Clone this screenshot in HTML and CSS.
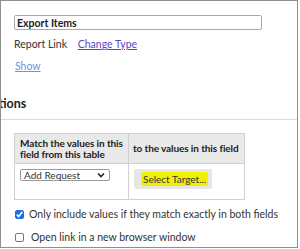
FILE: index.html
```html
<!DOCTYPE html>
<html lang="en">
<head>
    <meta charset="UTF-8">
    <title>Link Options</title>
    <link rel="stylesheet" href="styles.css">
</head>
<body>
    <div class="frame">
        <div class="top">
            <input class="name-input" type="text" value="Export Items">
            <div class="type-row">
                <span class="type-label">Report Link</span>
                <a href="#" class="change-link">Change Type</a>
            </div>
            <a href="#" class="show-link">Show</a>
        </div>

        <!-- Options -->
        <h2 class="section-title">Link Options</h2>
        <div class="section-body">
            <table class="match-table">
                <tr>
                    <th class="col-from">Match the values in this field from this table</th>
                    <th class="col-to">to the values in this field</th>
                </tr>
                <tr>
                    <td>
                        <div class="select-box">
                            <span>Add Request</span>
                            <svg class="chev" width="8" height="6" viewBox="0 0 8 6"><path d="M1 1.5 L4 4.5 L7 1.5" fill="none" stroke="#222" stroke-width="1.6"/></svg>
                        </div>
                    </td>
                    <td>
                        <div class="target-btn"><span class="hl">Select Target...</span></div>
                    </td>
                </tr>
            </table>

            <label class="check-row">
                <span class="box checked">
                    <svg width="9" height="9" viewBox="0 0 9 9"><path d="M1.8 4.6 L3.7 6.6 L7.3 2" fill="none" stroke="#fff" stroke-width="1.6"/></svg>
                </span>
                <span class="check-text">Only include values if they match exactly in both fields</span>
            </label>
            <label class="check-row second">
                <span class="box"></span>
                <span class="check-text">Open link in a new browser window</span>
            </label>
        </div>
    </div>
</body>
</html>
```

FILE: styles.css
```css
body {
    margin: 0;
    font-family: Lato, "Open Sans", sans-serif;
    color: #333;
    background: #fff;
}
.frame {
    width: 298px;
    height: 248px;
    border: 1px solid #8f8f8f;
    box-sizing: border-box;
    overflow: hidden;
}
.top {
    padding: 14px 0 0 13px;
}
.name-input {
    display: block;
    width: 248px;
    height: 15px;
    box-sizing: border-box;
    border: 1px solid #a9a9a9;
    border-radius: 2px;
    padding: 0 0 0 2px;
    margin: 0;
    font-family: Lato, sans-serif;
    font-weight: bold;
    font-size: 10.5px;
    color: #222;
    outline: none;
}
.type-row {
    margin-top: 7px;
    font-size: 10.5px;
    line-height: 14px;
}
.type-label {
    display: inline-block;
    width: 61px;
}
.change-link {
    color: #5b43c4;
    text-decoration: underline;
}
.show-link {
    display: inline-block;
    margin-top: 8px;
    margin-left: 1px;
    font-size: 10.5px;
    line-height: 14px;
    color: #6f93dc;
}
.section-title {
    margin: 22px 0 0 -46px;
    font-size: 12.5px;
    line-height: 18px;
    font-weight: bold;
    color: #222;
    padding-bottom: 6px;
    border-bottom: 1px solid #dcdcdc;
    white-space: nowrap;
}
.section-body {
    padding: 13px 0 0 13px;
}
.match-table {
    border-collapse: collapse;
    width: 231px;
    font-size: 10px;
    table-layout: fixed;
}
.match-table th {
    background: #e9e9e9;
    border: 1px solid #d0d0d0;
    text-align: left;
    font-weight: bold;
    line-height: 11px;
    padding: 2px 2px 2px 5px;
    height: 30px;
    box-sizing: border-box;
    color: #222;
    letter-spacing: -0.1px;
}
.match-table .col-from {
    width: 114px;
}
.match-table .col-to {
    white-space: nowrap;
    padding-left: 4px;
}
.match-table td {
    border: 1px solid #d0d0d0;
    vertical-align: top;
    height: 36px;
    box-sizing: border-box;
    padding: 5px 5px 0 5px;
}
.select-box {
    display: flex;
    align-items: center;
    justify-content: space-between;
    width: 90px;
    height: 12px;
    box-sizing: border-box;
    border: 1px solid #9a9a9a;
    border-radius: 2px;
    padding: 0 4px 0 3px;
    font-size: 10px;
    line-height: 10px;
}
.target-btn {
    width: 78px;
    height: 20px;
    background: #e6e6e6;
    border-radius: 2px;
    display: flex;
    align-items: center;
    padding-left: 7px;
    box-sizing: border-box;
    font-size: 10px;
}
.hl {
    background: #eef200;
    padding: 1px 2px;
    border-radius: 3px;
}
.check-row {
    display: flex;
    align-items: center;
    margin-top: 7px;
    font-size: 10.5px;
    line-height: 14px;
    margin-left: 1px;
}
.check-row.second {
    margin-top: 9px;
}
.box {
    width: 9px;
    height: 9px;
    box-sizing: border-box;
    border: 1px solid #777;
    border-radius: 2px;
    margin-right: 6px;
    display: flex;
}
.box.checked {
    background: #1e6fe0;
    border-color: #1e6fe0;
    margin-right: 5px;
}
.box.checked svg {
    margin: -1px;
}
.second .box {
    margin-right: 7px;
}
```
